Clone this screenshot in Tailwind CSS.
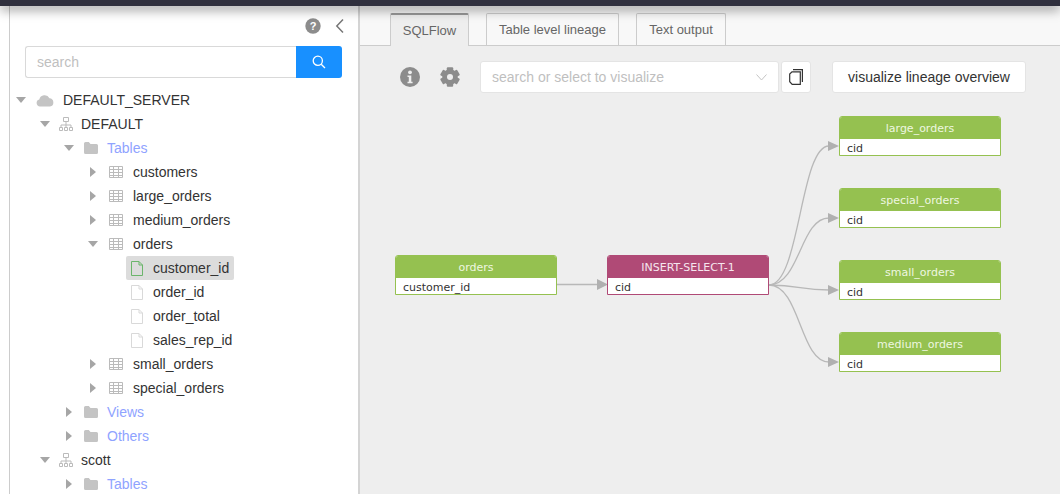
<!DOCTYPE html>
<html lang="en">
<head>
<meta charset="UTF-8" />
<title>SQLFlow</title>
<script src="https://cdn.jsdelivr.net/npm/@tailwindcss/browser@4"></script>
</head>
<body class="bg-white font-['Liberation_Sans',sans-serif] overflow-hidden">
<div class="w-[1060px] h-[494px] flex flex-col overflow-hidden">
  <!-- top bar -->
  <div class="relative z-10 h-[6px] shrink-0 bg-[#30303e] shadow-[0_3px_12px_rgba(0,0,0,0.55)]"></div>

  <div class="flex flex-1 min-h-0">
    <!-- sidebar -->
    <aside class="w-[360px] h-full shrink-0 pl-[9px] bg-white">
      <div class="h-full border-l border-l-[#ccc] border-r-2 border-r-[#d4d4d4] overflow-hidden">
        <div class="h-[40px] flex items-end justify-end pb-[12px] pr-[13px]">
          <svg width="16" height="16" viewBox="0 0 16 16" class="mr-[14px]"><circle cx="8" cy="8" r="7.7" fill="#8c8c8c"/><text x="8" y="12" text-anchor="middle" font-size="11" font-weight="700" fill="#fff" font-family="Liberation Sans">?</text></svg>
          <svg width="10" height="16" viewBox="0 0 10 16"><path d="M8 1.500 1.800 8 8 14.500" fill="none" stroke="#777" stroke-width="1.500"/></svg>
        </div>
        <div class="flex h-[32px] ml-[15px] w-[317px]">
          <div class="flex-1 flex items-center pl-[11px] text-[14px] text-[#bfbfbf] border border-[#d9d9d9] rounded-l-[3px] border-r-0">search</div>
          <div class="w-[46px] bg-[#1890ff] rounded-r-[3px] flex items-center justify-center">
            <svg width="14" height="14" viewBox="0 0 14 14" fill="none" stroke="#fff" stroke-width="1.300"><circle cx="5.800" cy="5.800" r="4.600"/><path d="M9.200 9.200 13 13"/></svg>
          </div>
        </div>

        <!-- tree -->
        <div class="mt-[10px] text-[14px] text-[#333]">
          <div class="flex items-center h-6 pl-[6px]">
            <svg width="10" height="6" viewBox="0 0 10 6" class="mr-[10px]"><path d="M0 0h10L5 6z" fill="#a6a6a6"/></svg>
            <svg width="18" height="13" viewBox="0 0 18 13" class="mr-[9px]"><path d="M4 12.500a3.500 3.500 0 0 1-.7-6.900A5.500 5.500 0 0 1 13.500 4.200 4.200 4.200 0 0 1 14 12.500z" fill="#c4c4c4"/></svg>
            <span>DEFAULT_SERVER</span>
          </div>
          <div class="flex items-center h-6 pl-[30px]">
            <svg width="10" height="6" viewBox="0 0 10 6" class="mr-[9px]"><path d="M0 0h10L5 6z" fill="#a6a6a6"/></svg>
            <svg width="14" height="14" viewBox="0 0 14 14" class="mr-[8px]" fill="none" stroke="#bbb"><path d="M4.500.5h5v4h-5zM.5 10.500h3v3h-3zM5.500 10.500h3v3h-3zM10.500 10.500h3v3h-3zM7 4.500v3.500M2 10.500V8h10v2.500M7 8v2.500"/></svg>
            <span>DEFAULT</span>
          </div>
          <div class="flex items-center h-6 pl-[54px]">
            <svg width="10" height="6" viewBox="0 0 10 6" class="mr-[10px]"><path d="M0 0h10L5 6z" fill="#a6a6a6"/></svg>
            <svg width="14" height="12" viewBox="0 0 14 12" class="mr-[9px]"><path d="M0 1.500Q0 0 1.500 0h3.300L6.500 2h6Q14 2 14 3.500v7q0 1.500-1.500 1.500h-11Q0 12 0 10.500z" fill="#c4c4c4"/></svg>
            <span class="text-[#8fa3ff]">Tables</span>
          </div>

          <div class="flex items-center h-6 pl-[80px]">
            <svg width="6" height="10" viewBox="0 0 6 10" class="mr-[13px]"><path d="M0 0v10l6-5z" fill="#a6a6a6"/></svg>
            <svg width="14" height="12" viewBox="0 0 14 12" class="mr-[10px]" fill="none" stroke="#bbb"><path d="M.5.500h13v11H.5zM.5 3.500h13M.5 6.500h13M.5 9.500h13M4.500.5v11M9.500.5v11"/></svg>
            <span>customers</span>
          </div>
          <div class="flex items-center h-6 pl-[80px]">
            <svg width="6" height="10" viewBox="0 0 6 10" class="mr-[13px]"><path d="M0 0v10l6-5z" fill="#a6a6a6"/></svg>
            <svg width="14" height="12" viewBox="0 0 14 12" class="mr-[10px]" fill="none" stroke="#bbb"><path d="M.5.500h13v11H.5zM.5 3.500h13M.5 6.500h13M.5 9.500h13M4.500.5v11M9.500.5v11"/></svg>
            <span>large_orders</span>
          </div>
          <div class="flex items-center h-6 pl-[80px]">
            <svg width="6" height="10" viewBox="0 0 6 10" class="mr-[13px]"><path d="M0 0v10l6-5z" fill="#a6a6a6"/></svg>
            <svg width="14" height="12" viewBox="0 0 14 12" class="mr-[10px]" fill="none" stroke="#bbb"><path d="M.5.500h13v11H.5zM.5 3.500h13M.5 6.500h13M.5 9.500h13M4.500.5v11M9.500.5v11"/></svg>
            <span>medium_orders</span>
          </div>
          <div class="flex items-center h-6 pl-[78px]">
            <svg width="10" height="6" viewBox="0 0 10 6" class="mr-[11px]"><path d="M0 0h10L5 6z" fill="#a6a6a6"/></svg>
            <svg width="14" height="12" viewBox="0 0 14 12" class="mr-[10px]" fill="none" stroke="#bbb"><path d="M.5.500h13v11H.5zM.5 3.500h13M.5 6.500h13M.5 9.500h13M4.500.5v11M9.500.5v11"/></svg>
            <span>orders</span>
          </div>

          <div class="h-6 pl-[116px] flex">
            <div class="flex items-center w-[108px] pl-[5px] bg-[#dcdcdc] rounded-[2px]">
              <svg width="12" height="15" viewBox="0 0 12 15" class="mr-[10px]" fill="none" stroke="#6bb56b"><path d="M.5.500h7.500l3.500 3.500v10.500H.5zM8 .5V4h3.500"/></svg>
              <span>customer_id</span>
            </div>
          </div>
          <div class="flex items-center h-6 pl-[121px]">
            <svg width="12" height="15" viewBox="0 0 12 15" class="mr-[10px]" fill="none" stroke="#d9d9d9"><path d="M.5.500h7.500l3.500 3.500v10.500H.5zM8 .5V4h3.500"/></svg>
            <span>order_id</span>
          </div>
          <div class="flex items-center h-6 pl-[121px]">
            <svg width="12" height="15" viewBox="0 0 12 15" class="mr-[10px]" fill="none" stroke="#d9d9d9"><path d="M.5.500h7.500l3.500 3.500v10.500H.5zM8 .5V4h3.500"/></svg>
            <span>order_total</span>
          </div>
          <div class="flex items-center h-6 pl-[121px]">
            <svg width="12" height="15" viewBox="0 0 12 15" class="mr-[10px]" fill="none" stroke="#d9d9d9"><path d="M.5.500h7.500l3.500 3.500v10.500H.5zM8 .5V4h3.500"/></svg>
            <span>sales_rep_id</span>
          </div>

          <div class="flex items-center h-6 pl-[80px]">
            <svg width="6" height="10" viewBox="0 0 6 10" class="mr-[13px]"><path d="M0 0v10l6-5z" fill="#a6a6a6"/></svg>
            <svg width="14" height="12" viewBox="0 0 14 12" class="mr-[10px]" fill="none" stroke="#bbb"><path d="M.5.500h13v11H.5zM.5 3.500h13M.5 6.500h13M.5 9.500h13M4.500.5v11M9.500.5v11"/></svg>
            <span>small_orders</span>
          </div>
          <div class="flex items-center h-6 pl-[80px]">
            <svg width="6" height="10" viewBox="0 0 6 10" class="mr-[13px]"><path d="M0 0v10l6-5z" fill="#a6a6a6"/></svg>
            <svg width="14" height="12" viewBox="0 0 14 12" class="mr-[10px]" fill="none" stroke="#bbb"><path d="M.5.500h13v11H.5zM.5 3.500h13M.5 6.500h13M.5 9.500h13M4.500.5v11M9.500.5v11"/></svg>
            <span>special_orders</span>
          </div>

          <div class="flex items-center h-6 pl-[56px]">
            <svg width="6" height="10" viewBox="0 0 6 10" class="mr-[12px]"><path d="M0 0v10l6-5z" fill="#a6a6a6"/></svg>
            <svg width="14" height="12" viewBox="0 0 14 12" class="mr-[9px]"><path d="M0 1.500Q0 0 1.500 0h3.300L6.500 2h6Q14 2 14 3.500v7q0 1.500-1.500 1.500h-11Q0 12 0 10.500z" fill="#c4c4c4"/></svg>
            <span class="text-[#8fa3ff]">Views</span>
          </div>
          <div class="flex items-center h-6 pl-[56px]">
            <svg width="6" height="10" viewBox="0 0 6 10" class="mr-[12px]"><path d="M0 0v10l6-5z" fill="#a6a6a6"/></svg>
            <svg width="14" height="12" viewBox="0 0 14 12" class="mr-[9px]"><path d="M0 1.500Q0 0 1.500 0h3.300L6.500 2h6Q14 2 14 3.500v7q0 1.500-1.500 1.500h-11Q0 12 0 10.500z" fill="#c4c4c4"/></svg>
            <span class="text-[#8fa3ff]">Others</span>
          </div>
          <div class="flex items-center h-6 pl-[30px]">
            <svg width="10" height="6" viewBox="0 0 10 6" class="mr-[9px]"><path d="M0 0h10L5 6z" fill="#a6a6a6"/></svg>
            <svg width="14" height="14" viewBox="0 0 14 14" class="mr-[8px]" fill="none" stroke="#bbb"><path d="M4.500.5h5v4h-5zM.5 10.500h3v3h-3zM5.500 10.500h3v3h-3zM10.500 10.500h3v3h-3zM7 4.500v3.500M2 10.500V8h10v2.500M7 8v2.500"/></svg>
            <span>scott</span>
          </div>
          <div class="flex items-center h-6 pl-[56px]">
            <svg width="6" height="10" viewBox="0 0 6 10" class="mr-[12px]"><path d="M0 0v10l6-5z" fill="#a6a6a6"/></svg>
            <svg width="14" height="12" viewBox="0 0 14 12" class="mr-[9px]"><path d="M0 1.500Q0 0 1.500 0h3.300L6.500 2h6Q14 2 14 3.500v7q0 1.500-1.500 1.500h-11Q0 12 0 10.500z" fill="#c4c4c4"/></svg>
            <span class="text-[#8fa3ff]">Tables</span>
          </div>
        </div>
      </div>
    </aside>

    <!-- main -->
    <main class="flex-1 flex flex-col bg-[#eeeeee] min-w-0">
      <div class="h-[40px] shrink-0 bg-[#f8f8f8] border-b border-[#ccc] flex items-end pl-[30px] text-[13px] text-[#666]">
        <div class="h-[33px] w-[79px] -mb-px flex items-center justify-center bg-[#eeeeee] border-x border-[#ccc] border-t-2 border-t-[#999] rounded-t-[2px]">SQLFlow</div>
        <div class="h-[32px] w-[133px] ml-[17px] flex items-center justify-center bg-[#f8f8f8] border-x border-t border-[#ccc] rounded-t-[2px]">Table level lineage</div>
        <div class="h-[32px] w-[90px] ml-[17px] flex items-center justify-center bg-[#f8f8f8] border-x border-t border-[#ccc] rounded-t-[2px]">Text output</div>
      </div>

      <div class="relative flex-1">
        <!-- toolbar -->
        <div class="flex items-center h-[32px] mt-[15px] pl-[40px]">
          <svg width="20" height="20" viewBox="0 0 20 20" class="mr-[20px]"><circle cx="10" cy="10" r="10" fill="#8c8c8c"/><circle cx="10" cy="5.300" r="1.900" fill="#eee"/><path d="M7.500 8.500h3.800v6.300h1.300v1.500H7.500v-1.500h1.300V10H7.500z" fill="#eee"/></svg>
          <svg width="20" height="20" viewBox="0 0 20 20" class="mr-[20px]">
            <g fill="#8c8c8c">
              <circle cx="10" cy="10" r="7.700"/>
              <rect x="6.800" y="0.300" width="6.400" height="5" rx="1"/>
              <rect x="6.800" y="0.300" width="6.400" height="5" rx="1" transform="rotate(60 10 10)"/>
              <rect x="6.800" y="0.300" width="6.400" height="5" rx="1" transform="rotate(120 10 10)"/>
              <rect x="6.800" y="0.300" width="6.400" height="5" rx="1" transform="rotate(180 10 10)"/>
              <rect x="6.800" y="0.300" width="6.400" height="5" rx="1" transform="rotate(240 10 10)"/>
              <rect x="6.800" y="0.300" width="6.400" height="5" rx="1" transform="rotate(300 10 10)"/>
            </g>
            <circle cx="10" cy="10" r="3" fill="#eee"/>
          </svg>
          <div class="w-[299px] h-[32px] bg-white rounded-[3px] border border-[#e4e4e4] flex items-center justify-between pl-[11px] pr-[11px] text-[14px] text-[#bfbfbf]">
            <span>search or select to visualize</span>
            <svg width="11" height="7" viewBox="0 0 11 7"><path d="M.5.500 5.500 6l5-5.500" fill="none" stroke="#c4c4c4"/></svg>
          </div>
          <div class="w-[30px] h-[32px] ml-[2px] bg-white rounded-[3px] border border-[#e4e4e4] flex items-center justify-center">
            <svg width="14" height="16" viewBox="0 0 14 16" fill="none" stroke="#333" stroke-width="1.200"><path d="M4 .6h9.400v12.500M3 2.800h8.300v12.600H3.200L.7 12.700V5z"/></svg>
          </div>
          <div class="w-[194px] h-[32px] ml-[21px] bg-white rounded-[3px] border border-[#e4e4e4] flex items-center justify-center text-[14px] text-[#333]">visualize lineage overview</div>
        </div>

        <!-- diagram canvas -->
        <svg class="absolute left-0 top-0" width="700" height="448" viewBox="360 46 700 448" fill="none">
          <g stroke="#b8b8b8" stroke-width="1.300">
            <path d="M557 284.500H598"/>
            <path d="M769 285C800 285 800 146 829 146"/>
            <path d="M769 285C800 285 800 218 829 218"/>
            <path d="M769 285C800 285 800 290 829 290"/>
            <path d="M769 285C800 285 800 362 829 362"/>
          </g>
          <g fill="#b0b0b0">
            <path d="M597 279l11 5.500-11 5.500z"/>
            <path d="M828 141l11 5-11 5z"/>
            <path d="M828 213l11 5-11 5z"/>
            <path d="M828 285l11 5-11 5z"/>
            <path d="M828 357l11 5-11 5z"/>
          </g>
        </svg>

        <div class="absolute left-[35px] top-[209px] w-[162px] h-[40px] font-['DejaVu_Sans',sans-serif] text-[11px] rounded-t-[3px] overflow-hidden border border-[#95c150] bg-white">
          <div class="h-[23px] -mx-px -mt-px bg-[#95c150] text-[#eef7e0] text-center leading-[25px]">orders</div>
          <div class="pl-[7px] pt-[2px] leading-[16px] text-[#333]">customer_id</div>
        </div>
        <div class="absolute left-[247px] top-[209px] w-[162px] h-[40px] font-['DejaVu_Sans',sans-serif] text-[11px] rounded-t-[3px] overflow-hidden border border-[#b04a76] bg-white">
          <div class="h-[23px] -mx-px -mt-px bg-[#b04a76] text-[#f6e6ee] text-center leading-[25px]">INSERT-SELECT-1</div>
          <div class="pl-[7px] pt-[2px] leading-[16px] text-[#333]">cid</div>
        </div>
        <div class="absolute left-[479px] top-[70px] w-[162px] h-[40px] font-['DejaVu_Sans',sans-serif] text-[11px] rounded-t-[3px] overflow-hidden border border-[#95c150] bg-white">
          <div class="h-[23px] -mx-px -mt-px bg-[#95c150] text-[#eef7e0] text-center leading-[25px]">large_orders</div>
          <div class="pl-[7px] pt-[2px] leading-[16px] text-[#333]">cid</div>
        </div>
        <div class="absolute left-[479px] top-[142px] w-[162px] h-[40px] font-['DejaVu_Sans',sans-serif] text-[11px] rounded-t-[3px] overflow-hidden border border-[#95c150] bg-white">
          <div class="h-[23px] -mx-px -mt-px bg-[#95c150] text-[#eef7e0] text-center leading-[25px]">special_orders</div>
          <div class="pl-[7px] pt-[2px] leading-[16px] text-[#333]">cid</div>
        </div>
        <div class="absolute left-[479px] top-[214px] w-[162px] h-[40px] font-['DejaVu_Sans',sans-serif] text-[11px] rounded-t-[3px] overflow-hidden border border-[#95c150] bg-white">
          <div class="h-[23px] -mx-px -mt-px bg-[#95c150] text-[#eef7e0] text-center leading-[25px]">small_orders</div>
          <div class="pl-[7px] pt-[2px] leading-[16px] text-[#333]">cid</div>
        </div>
        <div class="absolute left-[479px] top-[286px] w-[162px] h-[40px] font-['DejaVu_Sans',sans-serif] text-[11px] rounded-t-[3px] overflow-hidden border border-[#95c150] bg-white">
          <div class="h-[23px] -mx-px -mt-px bg-[#95c150] text-[#eef7e0] text-center leading-[25px]">medium_orders</div>
          <div class="pl-[7px] pt-[2px] leading-[16px] text-[#333]">cid</div>
        </div>
      </div>
    </main>
  </div>
</div>
</body>
</html>
